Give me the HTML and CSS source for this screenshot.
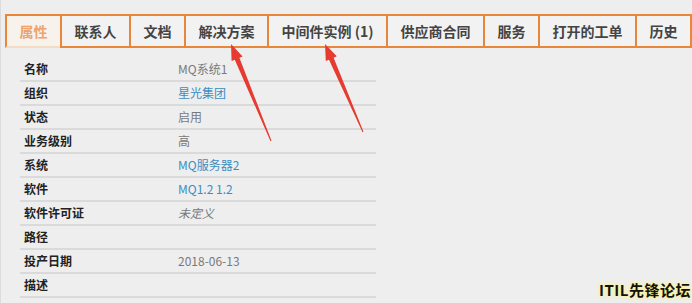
FILE: index.html
```html
<!DOCTYPE html>
<html lang="zh-CN">

<head>
    <title>MQ系统1 - 属性</title>
    <link rel="stylesheet" href="styles.css">
</head>

<body>
    <div class="page">
        <ul class="tabs">
            <li class="tab active">属性</li>
            <li class="tab">联系人</li>
            <li class="tab">文档</li>
            <li class="tab">解决方案</li>
            <li class="tab">中间件实例 (1)</li>
            <li class="tab">供应商合同</li>
            <li class="tab">服务</li>
            <li class="tab">打开的工单</li>
            <li class="tab last">历史</li>
        </ul>

        <div class="details">
            <div class="row"><span class="label">名称</span><span class="value">MQ系统1</span></div>
            <div class="row"><span class="label">组织</span><a class="value link" href="#">星光集团</a></div>
            <div class="row"><span class="label">状态</span><span class="value">启用</span></div>
            <div class="row"><span class="label">业务级别</span><span class="value">高</span></div>
            <div class="row"><span class="label">系统</span><a class="value link" href="#">MQ服务器2</a></div>
            <div class="row"><span class="label">软件</span><a class="value link" href="#">MQ1.2 1.2</a></div>
            <div class="row"><span class="label">软件许可证</span><span class="value undefined">未定义</span></div>
            <div class="row"><span class="label">路径</span><span class="value"></span></div>
            <div class="row"><span class="label">投产日期</span><span class="value">2018-06-13</span></div>
            <div class="row"><span class="label">描述</span><span class="value"></span></div>
        </div>

        <!-- annotation arrows drawn over the screenshot -->
        <svg class="arrows" width="692" height="303" viewBox="0 0 692 303">
            <polygon points="231,44 242.6,56.5 239.4,57.8 271.5,140.8 270.5,141.2 234.8,59.8 231.6,61.1" />
            <polygon points="325,44 336.8,56.3 333.6,57.7 363.5,131.8 362.5,132.2 329,59.7 325.8,61.1" />
        </svg>

        <div class="watermark">ITIL先锋论坛</div>
    </div>
</body>

</html>
```

FILE: styles.css
```css
body { margin: 0; background: #eeeeee; font-family: "Noto Sans CJK SC", "Liberation Sans", sans-serif; }
.page { position: relative; width: 692px; height: 303px; overflow: hidden; border-left: 1px solid #dcdcdc; box-sizing: border-box; }

.tabs { display: flex; list-style: none; margin: 14px 0 0 4px; padding: 0; border-top: 2px solid #e8873a; }
.tab { height: 30px; line-height: 30px; padding: 0 12.5px; border-left: 2px solid #e8873a; border-bottom: 2px solid #e8873a; background: #f2f2f2; color: #444; font-size: 14px; font-weight: bold; white-space: nowrap; }
.tab.active { background: #f7f2ec; color: #eda36c; border-bottom-color: #f3dcc6; }
.tab.last { border-right: 2px solid #e8873a; }

.details { margin: 10px 0 0 19px; width: 356px; }
.row { display: flex; height: 22px; line-height: 22px; border-bottom: 2px solid #dadada; font-size: 12px; }
.label { width: 154px; padding-left: 4px; font-weight: bold; color: #222; }
.value { color: #7a7a7a; text-decoration: none; }
.link { color: #3b8dc2; }
.undefined { font-style: italic; }

.arrows { position: absolute; left: -1px; top: 0; }
.arrows polygon { fill: #e53b30; }

.watermark { position: absolute; right: 1px; bottom: 3px; font-size: 15px; font-weight: bold; color: #111; letter-spacing: 0.5px; text-shadow: 0 0 3px #fff36a, 0 0 5px #fff59a; }
```
